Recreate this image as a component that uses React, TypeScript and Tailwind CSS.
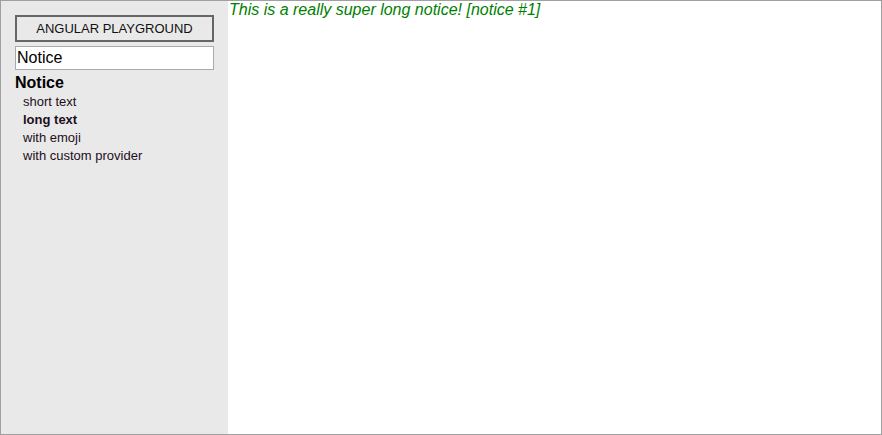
import React from "react";

export default function App() {
  const items = [
    { label: "short text", bold: false },
    { label: "long text", bold: true },
    { label: "with emoji", bold: false },
    { label: "with custom provider", bold: false },
  ];
  return (
    <div
      className="flex h-[435px] w-[882px] border border-[#a0a0a0] bg-white"
      style={{ fontFamily: '"Liberation Sans", Arial, sans-serif' }}
    >
      <div className="flex w-[227px] shrink-0 flex-col bg-[#e9e9e9] px-[14px] pt-[14px]">
        <button className="flex h-[27px] w-full items-center justify-center border-2 border-[#666666] bg-[#e9e9e9] text-[13px] leading-none text-[#111]">
          ANGULAR PLAYGROUND
        </button>
        <input
          className="mt-[4px] h-[24px] w-full border border-[#aaaaaa] bg-white px-[1px] text-[16px] text-black outline-none"
          defaultValue="Notice"
        />
        <div className="mt-[4px] text-[16px] font-bold leading-[18px] text-black">Notice</div>
        <ul className="flex flex-col pl-[8px] pt-[1px]">
          {items.map((it) => (
            <li
              key={it.label}
              className={`text-[13px] leading-[18px] text-[#1c0f1c] ${it.bold ? "font-bold" : ""}`}
            >
              {it.label}
            </li>
          ))}
        </ul>
      </div>
      <div className="flex-1 pl-[1px]">
        <div className="text-[16px] italic leading-[17px] text-[#008000]">
          This is a really super long notice! [notice #1]
        </div>
      </div>
    </div>
  );
}
